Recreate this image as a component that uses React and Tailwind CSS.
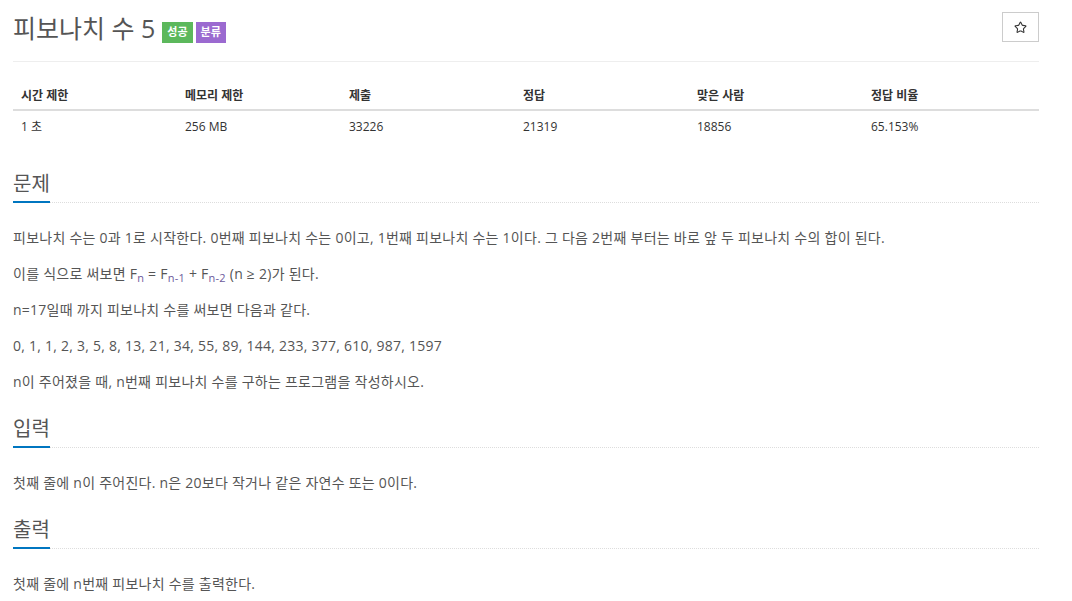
import { Star } from 'lucide-react'

const font = { fontFamily: "'Open Sans', 'Noto Sans CJK KR', sans-serif" }

const columns = [
  { head: '시간 제한', value: '1 초', w: 'w-[164px]' },
  { head: '메모리 제한', value: '256 MB', w: 'w-[164px]' },
  { head: '제출', value: '33226', w: 'w-[174px]' },
  { head: '정답', value: '21319', w: 'w-[174px]' },
  { head: '맞은 사람', value: '18856', w: 'w-[174px]' },
  { head: '정답 비율', value: '65.153%', w: 'flex-1' },
]

function SectionTitle({ children }) {
  return (
    <div className="flex border-b border-dotted border-[#ddd]">
      <h2 className="-mb-px border-b-2 border-[#0076c0] pb-[3px] text-[20px] leading-[28px] font-normal text-[#555]">
        {children}
      </h2>
    </div>
  )
}

function Section({ title, children }) {
  return (
    <section className="pb-[8px]">
      <SectionTitle>{title}</SectionTitle>
      <div className="mt-[24px] text-[14px] leading-[21px] tracking-[0.25px] text-[#555]">{children}</div>
    </section>
  )
}

function P({ children }) {
  return <p className="mb-[15px]">{children}</p>
}

export default function App() {
  return (
    <div className="min-h-screen bg-white" style={font}>
      <div className="ml-[13px] w-[1026px] pt-[12px]">
        {/* title */}
        <div className="flex items-start justify-between">
          <div className="flex items-end pt-px">
            <h1 className="text-[25px] leading-[30px] font-normal text-[#555]">피보나치 수 5</h1>
            <span className="ml-[7px] flex h-[21px] items-center bg-[#5cb85c] px-[5px] text-[11px] font-bold text-white">성공</span>
            <span className="ml-[3px] flex h-[21px] items-center bg-[#9b6ad0] px-[5px] text-[11px] font-bold text-white">분류</span>
          </div>
          <button className="flex h-[30px] w-[37px] items-center justify-center border border-[#ccc] bg-white text-[#333]">
            <Star size={13} strokeWidth={2} />
          </button>
        </div>
        <div className="mt-[18px] border-t border-[#eee]" />

        {/* limits table */}
        <div className="mt-[17px] mb-[27px] text-[12px]">
          <div className="flex border-b-2 border-[#ddd] font-bold text-[#333]">
            {columns.map((c) => (
              <div key={c.head} className={`${c.w} px-[8px] pt-[7px] pb-[4px] leading-[19px]`}>{c.head}</div>
            ))}
          </div>
          <div className="flex text-[#333]">
            {columns.map((c) => (
              <div key={c.head} className={`${c.w} px-[8px] pt-[6px] pb-[7px] leading-[19px]`}>{c.value}</div>
            ))}
          </div>
        </div>

        <Section title="문제">
          <P>피보나치 수는 0과 1로 시작한다. 0번째 피보나치 수는 0이고, 1번째 피보나치 수는 1이다. 그 다음 2번째 부터는 바로 앞 두 피보나치 수의 합이 된다.</P>
          <P>
            이를 식으로 써보면 F<sub className="text-[11px] text-[#6c5a9c]">n</sub> = F<sub className="text-[11px] text-[#6c5a9c]">n-1</sub> + F<sub className="text-[11px] text-[#6c5a9c]">n-2</sub> (n ≥ 2)가 된다.
          </P>
          <P>n=17일때 까지 피보나치 수를 써보면 다음과 같다.</P>
          <P>0, 1, 1, 2, 3, 5, 8, 13, 21, 34, 55, 89, 144, 233, 377, 610, 987, 1597</P>
          <P>n이 주어졌을 때, n번째 피보나치 수를 구하는 프로그램을 작성하시오.</P>
        </Section>

        <Section title="입력">
          <P>첫째 줄에 n이 주어진다. n은 20보다 작거나 같은 자연수 또는 0이다.</P>
        </Section>

        <Section title="출력">
          <P>첫째 줄에 n번째 피보나치 수를 출력한다.</P>
        </Section>
      </div>
    </div>
  )
}
